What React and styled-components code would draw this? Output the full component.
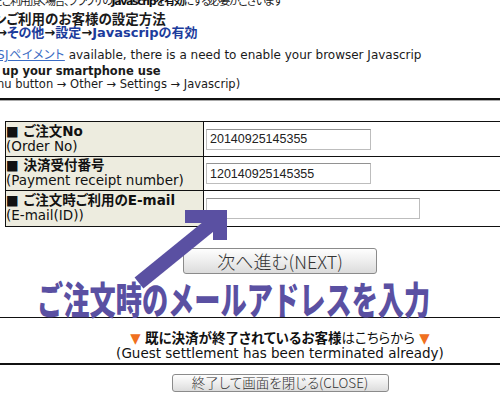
import React from "react";
import styled, { createGlobalStyle } from "styled-components";

const Global = createGlobalStyle`
  html, body { margin: 0; padding: 0; background: #fff; overflow: hidden; }
  body {
    width: 500px; height: 400px;
    font-family: "DejaVu Sans", "Noto Sans CJK JP", sans-serif;
    color: #111;
  }
`;

const Page = styled.div`
  position: relative;
  width: 560px;
  margin-top: -5px;
  font-feature-settings: "palt";
`;

const Note = styled.div`
  font-size: ${(p) => p.$size || 12}px;
  letter-spacing: ${(p) => p.$ls || 0}px;
  line-height: 13px;
  height: 13px;
  white-space: nowrap;
  margin-top: ${(p) => p.$mt || 0}px;
  margin-left: ${(p) => p.$shift || 0}px;
  font-weight: ${(p) => (p.$bold ? 700 : 400)};
  color: #1a1a1a;
`;

const Strong = styled.b`
  font-weight: 700;
  color: #111;
`;

const Blue = styled.span`
  color: #1c3c9c;
  font-weight: 700;
`;

const LinkText = styled.span`
  color: #3b6cc4;
  text-decoration: underline;
  letter-spacing: 0.5px;
`;

const TopRule = styled.div`
  margin-top: 7px;
  height: 2px;
  background: #111;
  border-bottom: 1px solid #aaa;
`;

const FormTable = styled.table`
  margin: 20px 0 0 5px;
  width: 550px;
  border-collapse: collapse;
`;

const Row = styled.tr`
  height: ${(p) => p.$h}px;
`;

const LabelCell = styled.td`
  width: 198px;
  box-sizing: border-box;
  background: #edecdf;
  border: 1px solid #111;
  padding: 0 0 1px 0;
  vertical-align: middle;
  font-size: 13.5px;
  line-height: 15px;
`;

const FieldCell = styled.td`
  border: 1px solid #111;
  padding: 0 0 0 2px;
  vertical-align: middle;
`;

const LabelTitle = styled.div`
  font-weight: 700;
  white-space: nowrap;
`;

const LabelSub = styled.div`
  white-space: nowrap;
`;

const Field = styled.input`
  display: block;
  box-sizing: border-box;
  width: ${(p) => p.$w}px;
  height: 21px;
  margin: 0;
  border: 1px solid #bdbdbd;
  border-top-color: #929292;
  padding: 0 3px;
  font: 12.5px "Liberation Sans", sans-serif;
  color: #222;
  background: #fff;
  outline: none;
`;

const ButtonRow = styled.div`
  display: flex;
  justify-content: center;
  padding-top: ${(p) => p.$pt}px;
`;

const Btn = styled.button`
  box-sizing: border-box;
  width: ${(p) => p.$w}px;
  height: ${(p) => p.$h}px;
  border: 1px solid #8b8b8b;
  border-radius: 3px;
  background: linear-gradient(#fefefe, #eeeeee 50%, #dcdcdc);
  font-family: "Noto Sans CJK JP", sans-serif;
  font-feature-settings: "palt";
  font-size: ${(p) => p.$fs}px;
  font-weight: 300;
  color: #333;
  padding: 0;
  line-height: 1;
`;

const Divider = styled.div`
  height: ${(p) => p.$t}px;
  background: #111;
  margin-top: ${(p) => p.$mt}px;
`;

const Notice = styled.div`
  margin-top: ${(p) => p.$mt}px;
  text-align: center;
  font-size: 13.5px;
  line-height: 15px;
  white-space: nowrap;
`;

const Tri = styled.span`
  color: #f07020;
`;

const Callout = styled.div`
  position: absolute;
  left: 37px;
  top: 284px;
  font-family: "Noto Sans CJK JP", sans-serif;
  font-weight: 900;
  font-size: 38px;
  line-height: 1;
  color: #5a50a2;
  transform: scaleX(0.69);
  transform-origin: left top;
  white-space: nowrap;
  font-feature-settings: normal;
`;

const ArrowSvg = styled.svg`
  position: absolute;
  left: 0;
  top: 5px;
  width: 560px;
  height: 400px;
  pointer-events: none;
`;

export default function App() {
  return (
    <>
      <Global />
      <Page>
        <Note $shift={-7} $size={11} $ls={-1.4}>
          をご利用頂く場合、ブラウザの<Strong>Javascripを有効</Strong>にする必要がございます
        </Note>
        <Note $mt={5} $bold $size={13.5} $shift={-6}>
          ンご利用のお客様の設定方法
        </Note>
        <Note $bold $size={13} $shift={-4}>
          <span>→</span><Blue>その他</Blue>→<Blue>設定</Blue>→<Blue>Javascripの有効</Blue>
        </Note>
        <Note $mt={10} $shift={-3}>
          <LinkText>SJペイメント</LinkText> available, there is a need to enable your browser Javascrip
        </Note>
        <Note $mt={3} $bold $size={11.5} $shift={2}>
          up your smartphone use
        </Note>
        <Note $shift={-3} $size={11.5}>nu button → Other → Settings → Javascrip)</Note>
        <TopRule />

        <FormTable>
          <tbody>
            <Row $h={35}>
              <LabelCell>
                <LabelTitle>■ ご注文No</LabelTitle>
                <LabelSub>(Order No)</LabelSub>
              </LabelCell>
              <FieldCell>
                <Field $w={165} defaultValue="20140925145355" />
              </FieldCell>
            </Row>
            <Row $h={34}>
              <LabelCell>
                <LabelTitle>■ 決済受付番号</LabelTitle>
                <LabelSub>(Payment receipt number)</LabelSub>
              </LabelCell>
              <FieldCell>
                <Field $w={165} defaultValue="120140925145355" />
              </FieldCell>
            </Row>
            <Row $h={36}>
              <LabelCell>
                <LabelTitle>■ ご注文時ご利用のE-mail</LabelTitle>
                <LabelSub>(E-mail(ID))</LabelSub>
              </LabelCell>
              <FieldCell>
                <Field $w={214} defaultValue="" />
              </FieldCell>
            </Row>
          </tbody>
        </FormTable>

        <ButtonRow $pt={21}>
          <Btn $w={194} $h={26} $fs={18}>次へ進む(NEXT)</Btn>
        </ButtonRow>

        <Divider $t={1} $mt={43} />

        <Notice $mt={13}>
          <Tri>▼</Tri> <Strong>既に決済が終了されているお客様</Strong>はこちらから <Tri>▼</Tri>
          <br />
          (Guest settlement has been terminated already)
        </Notice>

        <Divider $t={2} $mt={2} />

        <ButtonRow $pt={9}>
          <Btn $w={217} $h={18} $fs={13.5}>終了して画面を閉じる(CLOSE)</Btn>
        </ButtonRow>

        <ArrowSvg viewBox="0 0 560 400">
          <line x1="139" y1="283" x2="219" y2="218" stroke="#5a50a2" strokeWidth="14" />
          <polygon points="185,210 227,210 227,240 213,240 213,223 185,223" fill="#5a50a2" />
        </ArrowSvg>
        <Callout>ご注文時のメールアドレスを入力</Callout>
      </Page>
    </>
  );
}
